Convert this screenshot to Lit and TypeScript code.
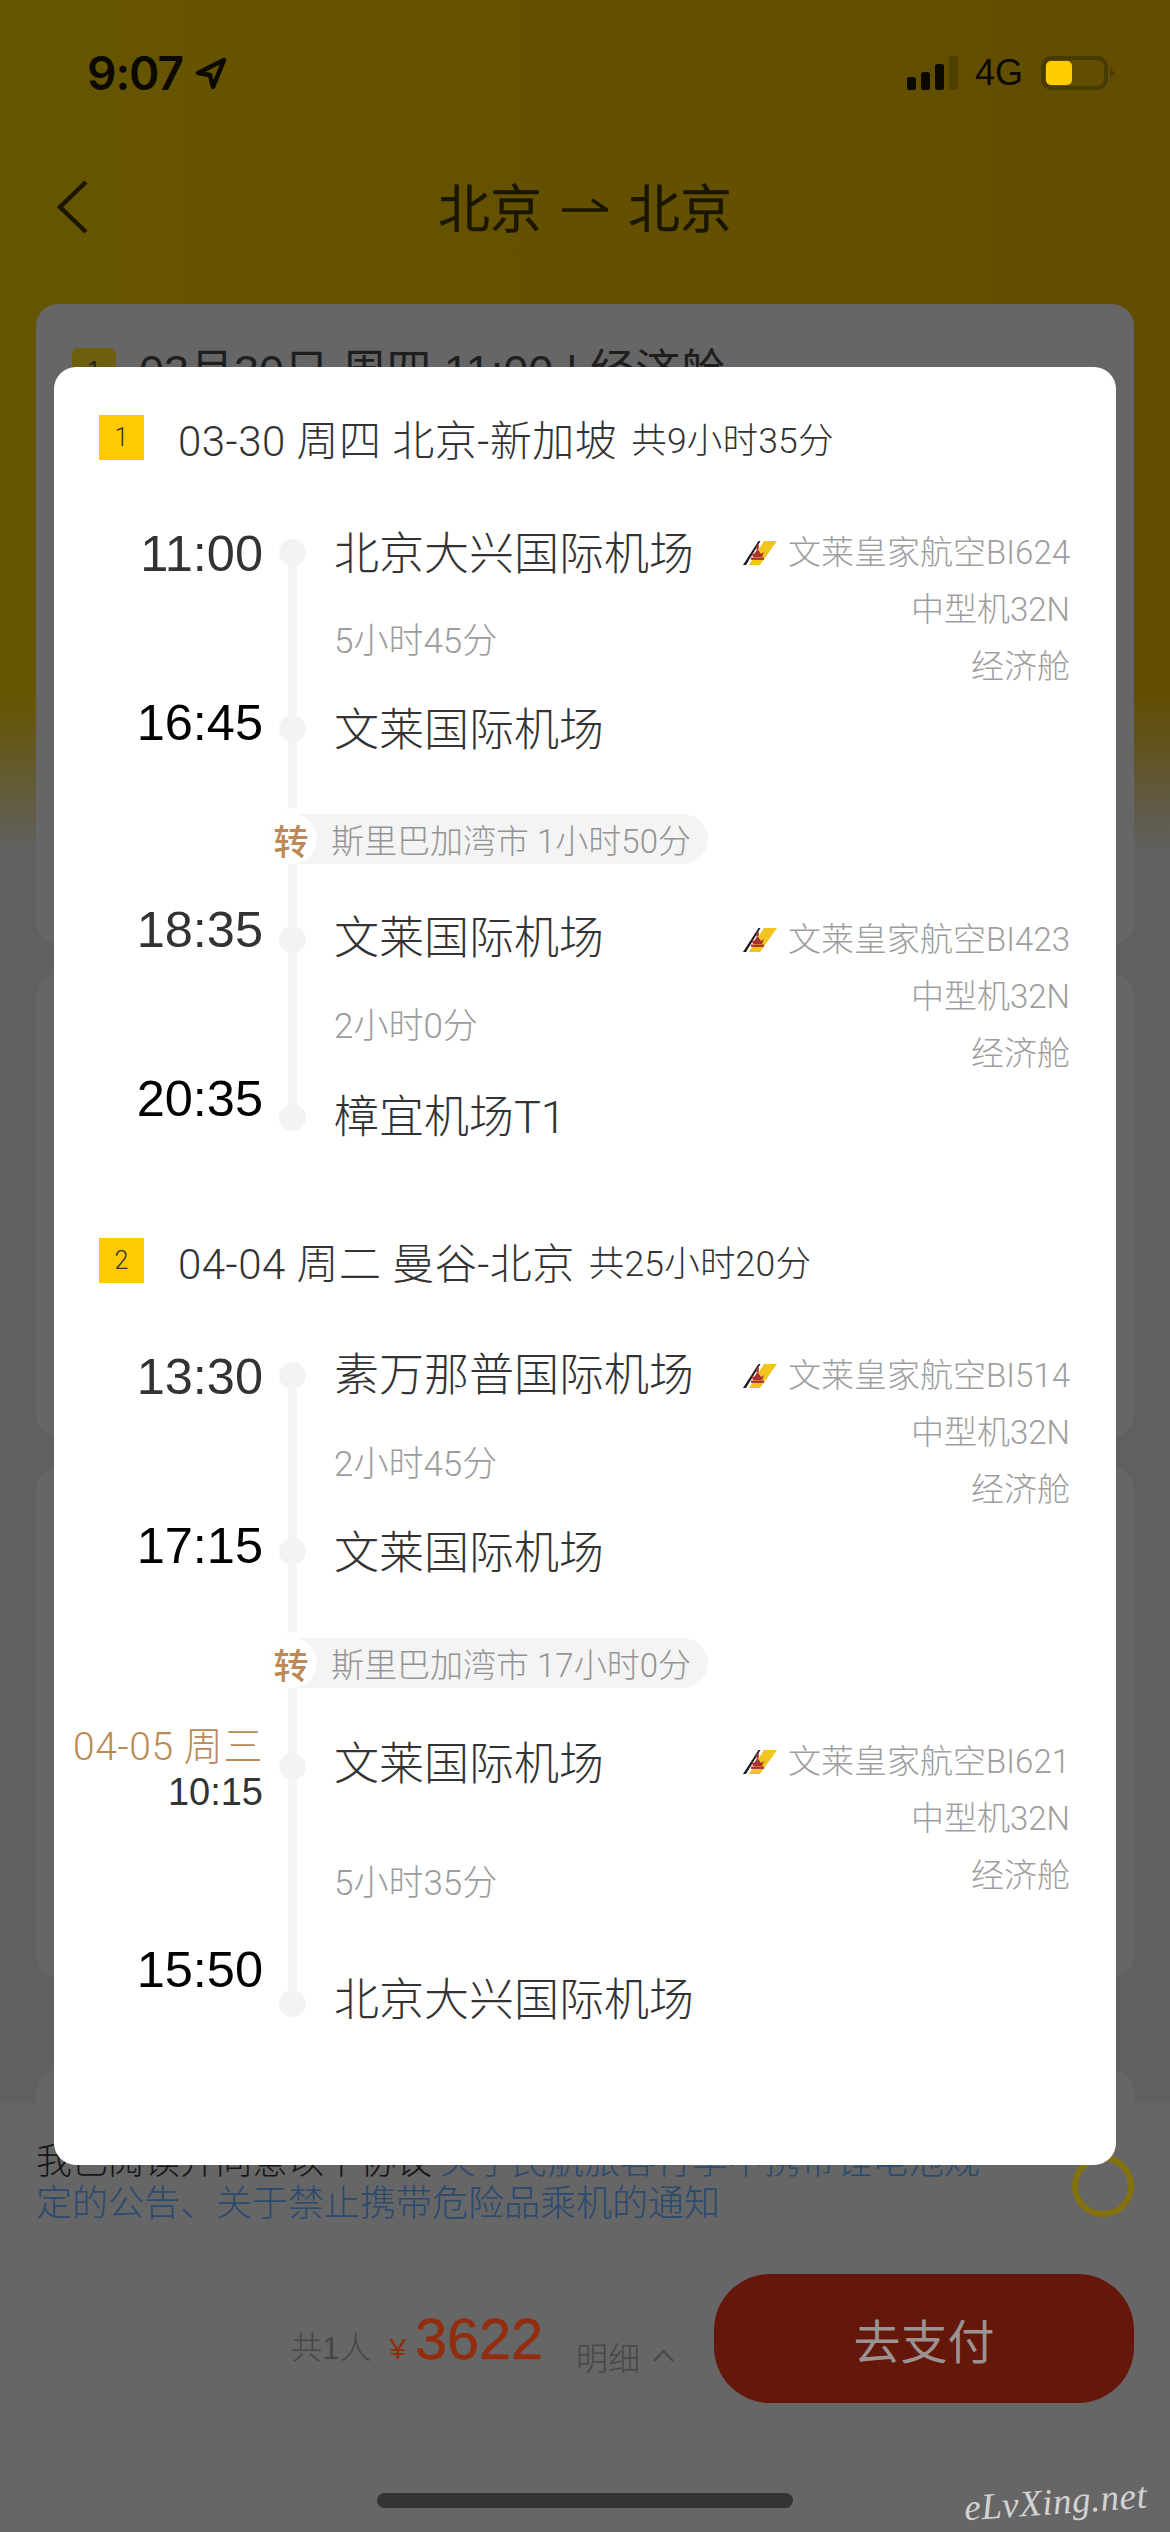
import { LitElement, html, css, svg } from "lit";
import { customElement } from "lit/decorators.js";

interface Stop { time: string; name: string; timeDy: number; nameDy: number; dark?: boolean; date?: string; small?: boolean }
interface Leg {
  lead: number; durH: number; trail: number; dep: Stop; arr: Stop; dur: string; durDy: number;
  flight: string; plane: string; cabin: string; rightDy: number; transfer?: string; first?: boolean;
}
interface Section { n: string; title: string; total: string; gap: number; legs: Leg[] }

const SECTIONS: Section[] = [
  {
    n: "1", title: "03-30 周四 北京-新加坡", total: "共9小时35分", gap: 0,
    legs: [
      { lead: 0, durH: 120, trail: 52, dur: "5小时45分", durDy: 2, flight: "文莱皇家航空BI624", plane: "中型机32N", cabin: "经济舱", rightDy: 0,
        dep: { time: "11:00", name: "北京大兴国际机场", timeDy: 2, nameDy: 3 },
        arr: { time: "16:45", name: "文莱国际机场", timeDy: -5, nameDy: 3, dark: true },
        transfer: "斯里巴加湾市 1小时50分" },
      { lead: 47, durH: 122, trail: 0, dur: "2小时0分", durDy: -1, flight: "文莱皇家航空BI423", plane: "中型机32N", cabin: "经济舱", rightDy: 0,
        dep: { time: "18:35", name: "文莱国际机场", timeDy: -9, nameDy: 0 },
        arr: { time: "20:35", name: "樟宜机场T1", timeDy: -18, nameDy: 1, dark: true } },
    ],
  },
  {
    n: "2", title: "04-04 周二 曼谷-北京", total: "共25小时20分", gap: 93,
    legs: [
      { lead: 0, durH: 120, trail: 53, dur: "2小时45分", durDy: 2, flight: "文莱皇家航空BI514", plane: "中型机32N", cabin: "经济舱", rightDy: 0,
        dep: { time: "13:30", name: "素万那普国际机场", timeDy: 2, nameDy: 1 },
        arr: { time: "17:15", name: "文莱国际机场", timeDy: -5, nameDy: 3, dark: true },
        transfer: "斯里巴加湾市 17小时0分" },
      { lead: 50, durH: 181, trail: 0, dur: "5小时35分", durDy: -1, flight: "文莱皇家航空BI621", plane: "中型机32N", cabin: "经济舱", rightDy: -5,
        dep: { time: "10:15", name: "文莱国际机场", timeDy: 4, nameDy: -1, date: "04-05 周三", small: true },
        arr: { time: "15:50", name: "北京大兴国际机场", timeDy: -33, nameDy: -2, dark: true } },
    ],
  },
];

const shift = (dy: number) => (dy < 0 ? `margin-bottom:${-2 * dy}px` : `margin-top:${2 * dy}px`);

const logo = svg`<svg class="logo" viewBox="0 0 34 24" width="34" height="24">
  <polygon points="21,0 34,0 17,24 6,24" fill="#f2c41f"/>
  <polygon points="15.5,0 17.5,0 3,24 0,24" fill="#1a1a1a"/>
  <path d="M8 11 l2 5 h9 l2 -5 l-3 2 l-3.5 -5 l-3.5 5 z" fill="#a83232"/>
  <rect x="13.4" y="3.5" width="2.4" height="5" fill="#a83232"/>
  <rect x="8" y="16.5" width="13" height="2.4" fill="#a83232"/>
</svg>`;

@customElement("flight-dialog")
class FlightDialog extends LitElement {
  static styles = css`
    :host { display: block; box-sizing: border-box; width: 1062px; background: #fff; border-radius: 22px; padding: 48px 0 134px; color: #333; font-family: "Roboto", "Noto Sans CJK SC", sans-serif; font-weight: 300; }
    .head { display: flex; align-items: center; height: 45px; padding-left: 45px; margin-bottom: 64px; }
    .badge { width: 45px; height: 45px; background: #ffcb00; display: flex; align-items: center; justify-content: center; font-size: 25px; color: #333; margin-right: 34px; }
    .title { font-size: 42px; letter-spacing: 0.5px; color: #333; margin-right: 14px; white-space: pre; }
    .total { font-size: 35.5px; letter-spacing: 0.2px; color: #333; }
    .leg { display: grid; grid-template-columns: 209px 59px auto 1fr; padding-right: 46px; }
    .rail { grid-column: 2; grid-row: 1 / -1; justify-self: center; width: 9px; background: #f5f5f5; }
    .rail.first { margin-top: 28px; }
    .rail.last { margin-bottom: 28px; }
    .dot { grid-column: 2; place-self: center; width: 27px; height: 27px; border-radius: 50%; background: #f3f3f3; }
    .time { grid-column: 1; place-self: center end; font-family: "Liberation Sans", sans-serif; font-weight: 400; font-size: 50.5px; line-height: 56px; color: #333; white-space: nowrap; }
    .time.dark { color: #000; }
    .stack { grid-column: 1; place-self: center end; display: flex; flex-direction: column; align-items: flex-end; }
    .date { font-size: 39px; letter-spacing: 0.6px; line-height: 45px; color: #b98a58; white-space: nowrap; }
    .smalltime { font-family: "Liberation Sans", sans-serif; font-weight: 400; font-size: 38px; line-height: 45px; color: #333; }
    .name { grid-column: 3; align-self: center; padding-left: 12px; font-size: 45px; line-height: 56px; color: #333; white-space: nowrap; }
    .dur { grid-column: 3; align-self: center; padding-left: 12px; font-size: 35px; line-height: 48px; color: #9c9c9c; white-space: nowrap; }
    .right { grid-column: 4; justify-self: end; display: flex; flex-direction: column; align-items: flex-end; font-size: 33px; line-height: 57px; color: #9e9e9e; white-space: nowrap; }
    .flight { display: flex; align-items: center; gap: 11px; }
    .logo { display: block; }
    .xfer { display: flex; align-items: center; height: 50px; margin: 6px 0 0 211px; }
    .xfer-wrap { width: 443px; height: 50px; border-radius: 25px; background: #f4f4f4; display: flex; align-items: center; }
    .zhuan { width: 52px; height: 50px; border-radius: 25px; background: #fff; color: #bd8a57; font-size: 35px; font-weight: 500; display: flex; align-items: center; justify-content: center; flex: none; }
    .xfer-text { margin-left: 14px; font-size: 33px; color: #949494; white-space: nowrap; }
  `;

  private stop(s: Stop, row: number) {
    const time = s.small
      ? html`<div class="stack" style="grid-row:${row};${shift(s.timeDy)}"><span class="date">${s.date}</span><span class="smalltime">${s.time}</span></div>`
      : html`<div class="time ${s.dark ? "dark" : ""}" style="grid-row:${row};${shift(s.timeDy)}">${s.time}</div>`;
    return html`${time}<div class="dot" style="grid-row:${row}"></div>
      <div class="name" style="grid-row:${row};${shift(s.nameDy)}">${s.name}</div>`;
  }

  private leg(l: Leg) {
    const rows = `${l.lead}px 56px ${l.durH}px 56px ${l.trail}px`;
    return html`<div class="leg" style="grid-template-rows:${rows}">
        <div class="rail ${l.lead ? "" : "first"} ${l.trail ? "" : "last"}"></div>
        ${this.stop(l.dep, 2)}
        <div class="dur" style="grid-row:3;${shift(l.durDy)}">${l.dur}</div>
        ${this.stop(l.arr, 4)}
        <div class="right" style="grid-row:2 / 5;align-self:start;margin-top:${l.rightDy}px">
          <div class="flight">${logo}<span>${l.flight}</span></div>
          <div>${l.plane}</div>
          <div>${l.cabin}</div>
        </div>
      </div>
      ${l.transfer ? html`<div class="xfer"><div class="xfer-wrap"><span class="zhuan">转</span><span class="xfer-text">${l.transfer}</span></div></div>` : ""}`;
  }

  render() {
    return SECTIONS.map(
      (s) => html`<div style="margin-top:${s.gap}px">
        <div class="head"><span class="badge">${s.n}</span><span class="title">${s.title}</span><span class="total">${s.total}</span></div>
        ${s.legs.map((l) => this.leg(l))}
      </div>`
    );
  }
}

@customElement("app-root")
class AppRoot extends LitElement {
  static styles = css`
    :host {
      display: block; position: relative; width: 1170px; height: 2532px; overflow: hidden;
      font-family: "Liberation Sans", "Noto Sans CJK SC", sans-serif;
      background:
        linear-gradient(180deg, rgba(96,96,96,0) 695px, #606060 850px),
        linear-gradient(90deg, #665500, #624d00);
    }
    .page { display: flex; flex-direction: column; height: 100%; }
    .status { flex: none; height: 146px; box-sizing: border-box; padding: 0 55px 0 87px; display: flex; align-items: center; color: #000; }
    .clock { font-family: "Inter", "Liberation Sans", sans-serif; font-weight: 600; font-size: 46px; letter-spacing: -1px; margin-right: 12px; color: #0b0900; }
    .spacer { flex: 1; }
    .signal { display: flex; align-items: flex-end; gap: 5px; height: 34px; margin-right: 17px; }
    .bar { width: 9px; border-radius: 2.5px; background: #0b0900; }
    .bar.off { background: #4f4200; }
    .net { font-size: 36px; color: #0b0900; margin-right: 18px; }
    .batt { box-sizing: border-box; width: 67px; height: 34px; border: 4px solid #483b00; border-radius: 11px; padding: 1px; }
    .batt-fill { width: 26px; height: 24px; background: #ffcc00; border-radius: 5px; }
    .nub { width: 0; height: 0; border-left: 5px solid #483b00; border-top: 5px solid transparent; border-bottom: 5px solid transparent; margin-left: 2px; }
    .nav { flex: none; height: 118px; display: flex; align-items: center; justify-content: center; position: relative; }
    .back { position: absolute; left: 55px; top: 34px; }
    .nav-title { display: flex; align-items: center; gap: 20px; font-size: 52px; color: #1a1600; -webkit-text-stroke: 0.3px #1a1600; }
    .main { flex: 1; min-height: 0; overflow: hidden; padding: 40px 36px 0; display: flex; flex-direction: column; }
    .card { flex: none; background: #666; border-radius: 22px; margin-bottom: 30px; box-sizing: border-box; }
    .card1 { height: 640px; padding: 40px 36px 0; display: flex; align-items: flex-start; }
    .card2 { height: 463px; }
    .card3 { height: 510px; margin-bottom: 93px; }
    .card4 { height: 120px; }
    .cbadge { width: 44px; height: 44px; border-radius: 6px; background: #6e5f10; font-size: 26px; color: #222; display: flex; align-items: center; justify-content: center; margin-top: 4px; margin-right: 23px; }
    .ctext { font-size: 45px; line-height: 56px; color: #1e1e1e; white-space: pre; }
    .panel { flex: none; height: 429px; box-sizing: border-box; background: #666; padding-top: 37px; display: flex; flex-direction: column; }
    .agree { display: flex; align-items: flex-start; padding: 0 37px 0 36px; justify-content: space-between; height: 97px; }
    .agree-text { font-size: 36px; line-height: 42px; color: #161616; white-space: nowrap; padding-top: 1px; font-weight: 300; }
    .link { color: #2a4a70; margin-left: 8px; }
    .link2 { color: #2a4a70; }
    .check { box-sizing: border-box; width: 62px; height: 62px; border: 6px solid #84720f; border-radius: 50%; margin-top: 15px; margin-right: -1px; }
    .pay { display: flex; justify-content: flex-end; align-items: center; padding-right: 36px; height: 129px; margin-top: 37px; }
    .price { display: flex; align-items: baseline; color: #474747; }
    .people { font-size: 31.5px; margin-right: 18px; font-weight: 300; }
    .yen { font-size: 30px; color: #8f2c0e; margin-right: 9px; }
    .amount { font-size: 57.5px; color: #932d0e; -webkit-text-stroke: 0.5px #932d0e; }
    .detail { display: flex; align-items: center; margin-left: 33px; margin-top: 34px; font-size: 32px; font-weight: 300; color: #474747; gap: 13px; margin-right: 40px; }
    .btn { width: 420px; height: 129px; border-radius: 56px; background: #65180a; color: #9a9391; font-size: 47px; display: flex; align-items: center; justify-content: center; }
    .home { width: 416px; height: 15px; border-radius: 8px; background: #333; margin: 90px auto 0; }
    .dialog { position: absolute; left: 54px; top: 367px; }
    .mark { position: absolute; left: 964px; top: 2480px; font-family: "Liberation Serif", serif; font-style: italic; font-size: 37px; color: #d2d2d2; letter-spacing: 0.5px; white-space: nowrap; transform: rotate(-4deg); }
  `;

  render() {
    return html`<div class="page">
        <div class="status">
          <span class="clock">9:07</span>
          <svg width="32" height="33" viewBox="0 0 32 33"><path d="M29 3 L3 16 L15 18 L18 30 Z" fill="none" stroke="#0b0900" stroke-width="4.5" stroke-linejoin="round"/></svg>
          <div class="spacer"></div>
          <div class="signal">
            <div class="bar" style="height:13px"></div>
            <div class="bar" style="height:18px"></div>
            <div class="bar" style="height:26px"></div>
            <div class="bar off" style="height:34px"></div>
          </div>
          <span class="net">4G</span>
          <div class="batt"><div class="batt-fill"></div></div>
          <div class="nub"></div>
        </div>
        <div class="nav">
          <svg class="back" width="34" height="54" viewBox="0 0 34 54"><path d="M31 2 L5 27 L31 52" fill="none" stroke="#1a1600" stroke-width="4.5"/></svg>
          <div class="nav-title">
            <span>北京</span>
            <svg width="46" height="16" viewBox="0 0 46 16"><path d="M0 13 H45 L30 3" fill="none" stroke="#1a1600" stroke-width="3.5"/></svg>
            <span>北京</span>
          </div>
        </div>
        <div class="main">
          <div class="card card1"><span class="cbadge">1</span><span class="ctext">03月30日 周四 11:00 | 经济舱</span></div>
          <div class="card card2"></div>
          <div class="card card3"></div>
          <div class="card card4"></div>
        </div>
        <div class="panel">
          <div class="agree">
            <div class="agree-text">我已阅读并同意以下协议<span class="link">关于民航旅客行李中携带锂电池规</span><br /><span class="link2">定的公告、关于禁止携带危险品乘机的通知</span></div>
            <div class="check"></div>
          </div>
          <div class="pay">
            <div class="price"><span class="people">共1人</span><span class="yen">¥</span><span class="amount">3622</span></div>
            <div class="detail"><span>明细</span>
              <svg width="21" height="13" viewBox="0 0 21 13"><path d="M1 12 L10.5 2 L20 12" fill="none" stroke="#474747" stroke-width="2"/></svg>
            </div>
            <div class="btn">去支付</div>
          </div>
          <div class="home"></div>
        </div>
      </div>
      <flight-dialog class="dialog"></flight-dialog>
      <div class="mark">eLvXing.net</div>`;
  }
}
